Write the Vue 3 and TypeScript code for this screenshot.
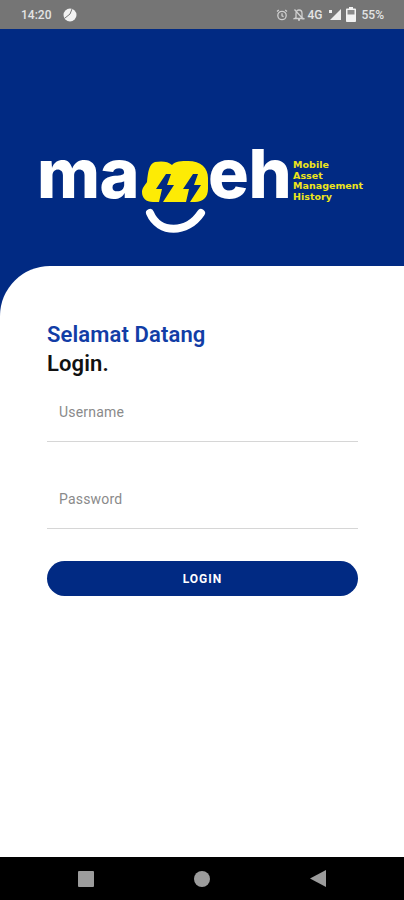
<template>
  <div class="page">
    <div class="status-bar">
      <span class="time">14:20</span>
      <svg class="leaf" width="14" height="14" viewBox="0 0 14 14">
        <circle cx="7" cy="7" r="6.5" fill="#f2f2f2" />
        <path d="M2 10 L7 6 L9 1" fill="none" stroke="#757575" stroke-width="1" />
      </svg>
      <div class="status-right">
        <svg width="12" height="12" viewBox="0 0 12 12" fill="none" stroke="#cfcfcf" stroke-width="1.3">
          <circle cx="6" cy="6.5" r="4.2" />
          <path d="M6 4.2V6.8L7.6 7.6M1 2.6L2.8 1M11 2.6L9.2 1" />
        </svg>
        <svg width="12" height="13" viewBox="0 0 12 13" fill="none" stroke="#cfcfcf" stroke-width="1.3">
          <path d="M3 9.5V5.5C3 3.5 4.4 2 6 2S9 3.5 9 5.5V9.5L10.5 10.5H1.5L3 9.5ZM5 12H7M1.5 1.5L10.5 11.5" />
        </svg>
        <span class="net">4G</span>
        <svg width="13" height="11" viewBox="0 0 13 11">
          <path d="M13 0V11H2Z" fill="#ececec" />
          <path d="M1 1H4V4H1Z" fill="#ececec" />
        </svg>
        <svg class="battery" width="10" height="15" viewBox="0 0 10 15">
          <path d="M3 0H7V1.5H9.2C9.6 1.5 10 1.9 10 2.3V14.2C10 14.6 9.6 15 9.2 15H.8C.4 15 0 14.6 0 14.2V2.3C0 1.9.4 1.5.8 1.5H3Z" fill="#f2f2f2" />
          <rect x="1.5" y="3" width="7" height="4.5" fill="#8a8a8a" />
        </svg>
        <span class="battery-level">55%</span>
      </div>
    </div>

    <header class="hero">
      <div class="logo">
        <span class="word">ma</span>
        <svg class="mark" width="68" height="74" viewBox="0 0 68 74">
          <path
            d="M14 1C20 0 27 0 31 4C34 0 41 0 47 0C60 0 67 7 67 17V28C67 36 62 41 54 41H12C5 41 1 37 1 31C1 27 4 24 6 21C7 11 8 3 14 1Z"
            fill="#fdeb05"
          />
          <path d="M25 13L15 28H21L18 41H22L33 24H26L30 13Z" fill="#012a83" />
          <path d="M52 13L42 28H48L45 41H49L60 24H53L57 13Z" fill="#012a83" />
          <path d="M9 52C18 73 46 73 60 52" fill="none" stroke="#fff" stroke-width="8" stroke-linecap="round" />
        </svg>
        <span class="word">eh</span>
        <div class="tagline">
          <span>Mobile</span>
          <span>Asset</span>
          <span>Management</span>
          <span>History</span>
        </div>
      </div>
    </header>

    <main class="sheet-wrap">
      <section class="sheet">
        <h1 class="welcome">Selamat Datang</h1>
        <h2 class="subtitle">Login.</h2>
        <form class="form" @submit.prevent>
          <input class="field" type="text" placeholder="Username" />
          <input class="field" type="password" placeholder="Password" />
          <button class="login-btn" type="submit">LOGIN</button>
        </form>
      </section>
    </main>

    <nav class="nav-bar">
      <span class="nav-square"></span>
      <span class="nav-circle"></span>
      <svg width="16" height="17" viewBox="0 0 16 17"><path d="M16 0V17L0 8.5Z" fill="#9c9c9c" /></svg>
    </nav>
  </div>
</template>

<script setup lang="ts">
</script>

<style>
html,
body {
  margin: 0;
  background: #fff;
}
</style>

<style scoped>
.page {
  width: 404px;
  height: 900px;
  display: flex;
  flex-direction: column;
  font-family: Roboto, 'Liberation Sans', sans-serif;
  overflow: hidden;
}

.status-bar {
  height: 29px;
  box-sizing: border-box;
  background: #757575;
  display: flex;
  align-items: center;
  padding: 0 20px 0 21px;
  color: #e4e4e4;
  font-size: 12px;
  font-weight: 500;
}
.time {
  width: 42px;
}
.status-right {
  margin-left: auto;
  display: flex;
  align-items: center;
  gap: 5px;
}
.net {
  margin-left: -2px;
}
.battery-level {
  margin-left: 1px;
}

.hero {
  height: 237px;
  box-sizing: border-box;
  background: #012a83;
  padding: 111px 0 0 37px;
}
.logo {
  display: flex;
  align-items: flex-start;
  height: 90px;
}
.word {
  font-family: Inter, Roboto, sans-serif;
  font-size: 68px;
  font-weight: 800;
  line-height: 66px;
  letter-spacing: -0.5px;
  color: #fff;
}
.mark {
  flex: none;
  margin: 21px -1px 0 2px;
}
.tagline {
  display: flex;
  flex-direction: column;
  margin: 20px 0 0 2px;
  font-family: 'DejaVu Sans', Roboto, sans-serif;
  font-size: 9.5px;
  font-weight: 700;
  line-height: 10.5px;
  color: #eee51a;
}

.sheet-wrap {
  flex: 1;
  background: #012a83;
  min-height: 0;
}
.sheet {
  height: 100%;
  box-sizing: border-box;
  background: #fff;
  border-top-left-radius: 50px;
  padding: 54px 46px 0 47px;
}
.welcome,
.subtitle {
  margin: 0;
  font-size: 22px;
  line-height: 29px;
  font-weight: 600;
  letter-spacing: 0.12px;
}
.welcome {
  color: #123da6;
}
.subtitle {
  color: #111;
}

.form {
  display: flex;
  flex-direction: column;
  gap: 29px;
  margin-top: 6px;
}
.field {
  height: 58px;
  box-sizing: border-box;
  padding: 0 12px 1px;
  border: none;
  border-bottom: 1px solid #d6d6d6;
  outline: none;
  background: transparent;
  font-family: inherit;
  font-size: 14px;
  letter-spacing: 0.2px;
}
.field::placeholder {
  color: #8a8a8a;
  opacity: 1;
}
.login-btn {
  height: 35px;
  margin-top: 3px;
  border: none;
  border-radius: 18px;
  background: #012a83;
  color: #fff;
  font-family: inherit;
  font-size: 12px;
  font-weight: 700;
  letter-spacing: 1px;
}

.nav-bar {
  height: 43px;
  flex: none;
  box-sizing: border-box;
  background: #000;
  display: flex;
  align-items: center;
  gap: 100px;
  padding-left: 78px;
}
.nav-square {
  width: 16px;
  height: 16px;
  border-radius: 1px;
  background: #9c9c9c;
}
.nav-circle {
  width: 16px;
  height: 16px;
  border-radius: 50%;
  background: #9c9c9c;
}
</style>
